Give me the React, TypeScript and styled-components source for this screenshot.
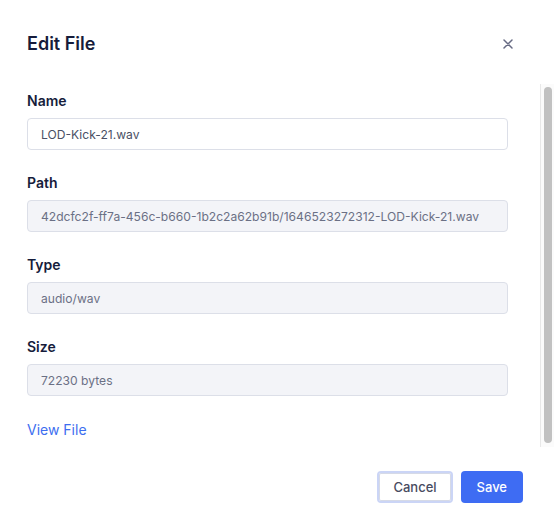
import React from "react";
import styled, { createGlobalStyle } from "styled-components";

const Global = createGlobalStyle`
  html, body { margin: 0; padding: 0; background: #ffffff; }
  body { font-family: Inter, "Noto Sans", "Liberation Sans", sans-serif; -webkit-font-smoothing: antialiased; }
  * { box-sizing: border-box; }
`;

const Modal = styled.div`
  width: 554px;
  height: 528px;
  display: flex;
  flex-direction: column;
  background: #ffffff;
`;

const Header = styled.div`
  display: flex;
  align-items: center;
  justify-content: space-between;
  padding: 30px 41px 26px 27px;
`;

const Title = styled.h2`
  margin: 0;
  font-size: 18px;
  line-height: 28px;
  font-weight: 600;
  color: #161c3b;
`;

const CloseButton = styled.button`
  border: none;
  background: transparent;
  padding: 0;
  width: 10px;
  height: 10px;
  display: flex;
  align-items: center;
  justify-content: center;
  color: #666a83;
  cursor: pointer;
`;

const BodyFrame = styled.div`
  height: 363px;
  display: flex;
`;

const Body = styled.div`
  flex: 1;
  min-width: 0;
  overflow: hidden;
  padding: 7px 32px 14px 27px;
  display: flex;
  flex-direction: column;
`;

const ScrollTrack = styled.div`
  width: 14px;
  display: flex;
  padding: 3px 2px 4px 3px;
  background: #fbfbfb;
  border-left: 1px solid #e8e8e8;
`;

const ScrollThumb = styled.div`
  flex: 1;
  background: #c1c1c1;
  border-radius: 4px;
`;

const Field = styled.div`
  display: flex;
  flex-direction: column;
  gap: 7px;
  margin-bottom: 23px;
`;

const Label = styled.label`
  font-size: 14px;
  line-height: 20px;
  font-weight: 600;
  color: #161c3b;
`;

const Input = styled.input<{ $disabled?: boolean }>`
  height: 32px;
  width: 100%;
  padding: 0 13px;
  border: 1px solid #dcdfe8;
  border-radius: 4px;
  font-family: inherit;
  font-size: 12.1px;
  color: ${(p) => (p.$disabled ? "#6b7085" : "#4a5064")};
  background: ${(p) => (p.$disabled ? "#f3f4f8" : "#ffffff")};
  outline: none;
  &:disabled { opacity: 1; -webkit-text-fill-color: #6b7085; }
`;

const LinkText = styled.a`
  margin-top: 1px;
  font-size: 14px;
  line-height: 20px;
  color: #3d6ef0;
  text-decoration: none;
  align-self: flex-start;
`;

const Footer = styled.div`
  display: flex;
  justify-content: flex-end;
  gap: 8px;
  padding: 24px 31px 25px 27px;
`;

const Button = styled.button<{ $primary?: boolean }>`
  height: 32px;
  padding: 0 ${(p) => (p.$primary ? "16px" : "14px")};
  border-radius: 4px;
  font-family: inherit;
  font-size: 13px;
  font-weight: 500;
  cursor: pointer;
  border: ${(p) => (p.$primary ? "none" : "2px solid #cbd5f6")};
  background: ${(p) => (p.$primary ? "#3e6cf3" : "#ffffff")};
  color: ${(p) => (p.$primary ? "#ffffff" : "#474b60")};
  box-shadow: ${(p) => (p.$primary ? "none" : "inset 0 0 0 1px #d6dae6")};
`;

const fields = [
  { label: "Name", value: "LOD-Kick-21.wav", disabled: false },
  { label: "Path", value: "42dcfc2f-ff7a-456c-b660-1b2c2a62b91b/1646523272312-LOD-Kick-21.wav", disabled: true },
  { label: "Type", value: "audio/wav", disabled: true },
  { label: "Size", value: "72230 bytes", disabled: true },
];

export default function App() {
  return (
    <>
      <Global />
      <Modal>
        <Header>
          <Title>Edit File</Title>
          <CloseButton aria-label="Close">
            <svg width="10" height="10" viewBox="0 0 10 10">
              <path d="M1 1 L9 9 M9 1 L1 9" stroke="currentColor" strokeWidth="1.5" strokeLinecap="round" />
            </svg>
          </CloseButton>
        </Header>
        <BodyFrame>
          <Body>
            {fields.map((f) => (
              <Field key={f.label}>
                <Label>{f.label}</Label>
                <Input $disabled={f.disabled} disabled={f.disabled} defaultValue={f.value} />
              </Field>
            ))}
            <LinkText href="#">View File</LinkText>
          </Body>
          <ScrollTrack>
            <ScrollThumb />
          </ScrollTrack>
        </BodyFrame>
        <Footer>
          <Button>Cancel</Button>
          <Button $primary>Save</Button>
        </Footer>
      </Modal>
    </>
  );
}
